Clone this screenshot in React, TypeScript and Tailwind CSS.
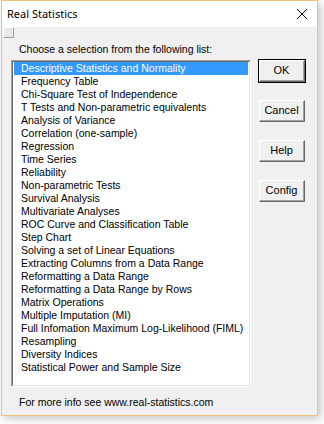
import React from "react";

const items = [
  "Descriptive Statistics and Normality",
  "Frequency Table",
  "Chi-Square Test of Independence",
  "T Tests and Non-parametric equivalents",
  "Analysis of Variance",
  "Correlation (one-sample)",
  "Regression",
  "Time Series",
  "Reliability",
  "Non-parametric Tests",
  "Survival Analysis",
  "Multivariate Analyses",
  "ROC Curve and Classification Table",
  "Step Chart",
  "Solving a set of Linear Equations",
  "Extracting Columns from a Data Range",
  "Reformatting a Data Range",
  "Reformatting a Data Range by Rows",
  "Matrix Operations",
  "Multiple Imputation (MI)",
  "Full Infomation Maximum Log-Likelihood (FIML)",
  "Resampling",
  "Diversity Indices",
  "Statistical Power and Sample Size",
];

function Btn({ label, def }: { label: string; def?: boolean }) {
  return (
    <div className={def ? "border border-black" : "border border-transparent"}>
      <div className="border-t border-l border-white border-r border-b border-r-[#696969] border-b-[#696969]">
        <div className="h-[20px] w-[44px] flex items-center justify-center border-r border-b border-r-[#a0a0a0] border-b-[#a0a0a0] bg-[#f0f0f0] text-[11px] text-black">
          {label}
        </div>
      </div>
    </div>
  );
}

export default function App() {
  return (
    <div
      className="w-[324px] h-[424px] bg-white overflow-hidden"
      style={{ fontFamily: '"Liberation Sans", Arial, sans-serif' }}
    >
      <div className="ml-[1px] w-[317px] h-[416px] border border-[#f0c36f] bg-[#f0f0f0] flex flex-col shadow-[3px_3px_8px_rgba(0,0,0,0.22)]">
        <div className="h-[26px] bg-white flex items-center justify-between pl-[5px] pr-[8px] shrink-0">
          <span className="text-[11px] text-black" style={{ fontFamily: '"Noto Sans", "Open Sans", sans-serif' }}>
            Real Statistics
          </span>
          <svg width="12" height="12" viewBox="0 0 12 12" className="mr-[1px]">
            <path d="M1 1 L11 11 M11 1 L1 11" stroke="#000" strokeWidth="1" />
          </svg>
        </div>
        <div className="ml-[1px] w-[11px] h-[11px] border-t border-l border-white border-r border-b border-r-[#a0a0a0] border-b-[#a0a0a0] bg-[#e8e8e8]" />
        <div className="ml-[17px] mt-[5px] h-[13px] leading-[13px] text-[10.5px] text-black">
          Choose a selection from the following list:
        </div>
        <div className="flex mt-[4px]">
          <div className="ml-[9px] w-[240px] h-[327px] border-t border-l border-[#a0a0a0] border-r border-b border-r-white border-b-white">
            <div className="h-full border-t border-l border-[#696969] border-r border-b border-r-[#e3e3e3] border-b-[#e3e3e3] bg-white pt-0 px-[1px]">
              {items.map((it, i) => (
                <div
                  key={it}
                  className={
                    "h-[13px] leading-[13px] text-[10.5px] pl-[7px] whitespace-nowrap " +
                    (i === 0 ? "bg-[#3399ff] text-white" : "text-black")
                  }
                >
                  {it}
                </div>
              ))}
            </div>
          </div>
          <div className="ml-[7px] -mt-[1px] flex flex-col gap-[16px]">
            <Btn label="OK" def />
            <Btn label="Cancel" />
            <Btn label="Help" />
            <Btn label="Config" />
          </div>
        </div>
        <div className="ml-[17px] mt-[9px] h-[13px] leading-[13px] text-[10.5px] text-black">
          For more info see www.real-statistics.com
        </div>
      </div>
    </div>
  );
}
